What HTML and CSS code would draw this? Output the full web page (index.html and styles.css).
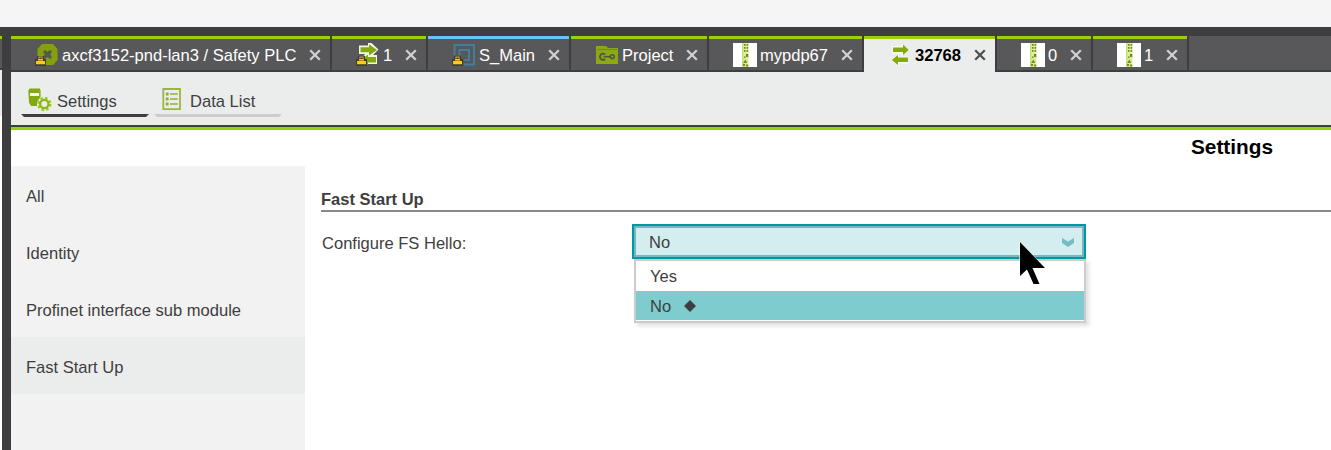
FILE: index.html
```html
<!DOCTYPE html>
<html lang="en">
<head>
<meta charset="utf-8">
<title>Settings</title>
<link rel="stylesheet" href="styles.css">
</head>
<body>
<svg width="0" height="0" class="defs">
  <defs>
    <symbol id="close" viewBox="0 0 12 12"><path d="M1.2 1.2 10.8 10.8M10.8 1.2 1.2 10.8" fill="none" stroke="currentColor" stroke-width="2.3"/></symbol>
    <symbol id="lock" viewBox="0 0 11 11"><path d="M0 4H2V1H9V4H11V11H0Z" fill="#3d3d38"/><path d="M4 3.500V2H7V3.500" fill="none" stroke="#d9b000" stroke-width="1.200"/><path d="M3 4H8V6H10V9.300H1V6H3Z" fill="#fbd000"/><path d="M3 5.500H8" stroke="#8d7a12" stroke-width=".8"/></symbol>
    <symbol id="module" viewBox="0 0 24 24"><path d="M0 0H24V24H0Z" fill="#fff"/><path d="M9 0H15.500V24H9Z" fill="#dcec9c"/><path d="M9 0H10.500V24H9Z" fill="#c9e36a"/><path d="M11 1H12.600V2.800H11ZM13.600 1H15.200V2.800H13.600ZM11 4H12.600V5.800H11ZM13.600 4H15.200V5.800H13.600ZM11 7H12.600V8.800H11ZM13.600 7H15.200V8.800H13.600ZM13 11H15.300V14H13ZM11 13.500H12.500V15H11ZM10 20 12.500 16.500 14.200 20ZM10 21H12V23H10ZM13 21.500H15.200V23.500H13Z" fill="#6f8a20"/></symbol>
  </defs>
</svg>
<div class="app">
  <div class="edge"><i class="edge-tab"></i></div>
  <div class="window">
    <nav class="tabs">
      <div class="tab t-plc">
        <svg class="icon" viewBox="0 0 24 24"><path d="M7 1H18L22.500 6V17L18 22H7L2.500 17V6Z" fill="#84a10d"/><path d="M8.500 7.500 11 7.500 12.500 9 14 7.500H16.500V10L15 11.500 16.500 13V15.500H14L12.500 14 11 15.500H8.500V13L10 11.500 8.500 10Z" fill="#55594a"/><use href="#lock" x="0" y="12" width="11" height="11"/></svg>
        <span>axcf3152-pnd-lan3 / Safety PLC</span><svg class="x"><use href="#close"/></svg>
      </div>
      <div class="tab t-one">
        <svg class="icon" viewBox="0 0 24 24"><path d="M3 2.500H12V0H15.500L22.500 6.500 17 12H21V21H5V17L9 11H3Z" fill="#f2f6e8"/><path d="M4.500 4.300H13V1.300L21 7 13 12.500V9.300H4.500ZM20 14H12V11.500L5 17 12 22V19.500H20Z" fill="#84a810"/><use href="#lock" x="0" y="12" width="11" height="11"/></svg>
        <span>1</span><svg class="x"><use href="#close"/></svg>
      </div>
      <div class="tab t-main blue">
        <svg class="icon" viewBox="0 0 24 24"><path d="M2.500 12V2H22V21.500H12M7.500 12V7H17V17H12" fill="none" stroke="#437f9c" stroke-width="2"/><use href="#lock" x="0" y="12" width="11" height="11"/></svg>
        <span>S_Main</span><svg class="x"><use href="#close"/></svg>
      </div>
      <div class="tab t-project">
        <svg class="icon" viewBox="0 0 24 24"><path d="M0 3H10L12 5H22V21H0Z" fill="#8ca812"/><path d="M1 6.500H21" stroke="#728b1c"/><path d="M9 11.500A3 3 0 1 0 9 16" fill="none" stroke="#4e5546" stroke-width="1.700"/><path d="M7.500 13.700H14.500" stroke="#4e5546" stroke-width="1.600"/><circle cx="16.300" cy="13.700" r="1.900" fill="none" stroke="#4e5546" stroke-width="1.500"/></svg>
        <span>Project</span><svg class="x"><use href="#close"/></svg>
      </div>
      <div class="tab t-mypdp">
        <svg class="icon"><use href="#module"/></svg>
        <span>mypdp67</span><svg class="x"><use href="#close"/></svg>
      </div>
      <div class="tab t-active active">
        <svg class="icon" viewBox="0 0 24 24"><path d="M1.500 3.500H11V1L18 7 11 12.500V10H1.500ZM17 14H7.500V11.500L0 17 7.500 22.500V20H17Z" fill="#f8fbee" stroke="#f8fbee"/><path d="M2 4.500H12V1.500L17.800 7 12 12V9H2ZM17 14.500H7V12L.7 17 7 22V19H17Z" fill="#84a810"/></svg>
        <span>32768</span><svg class="x"><use href="#close"/></svg>
      </div>
      <div class="tab t-num">
        <svg class="icon"><use href="#module"/></svg>
        <span>0</span><svg class="x"><use href="#close"/></svg>
      </div>
      <div class="tab t-num">
        <svg class="icon"><use href="#module"/></svg>
        <span>1</span><svg class="x"><use href="#close"/></svg>
      </div>
      <div class="tab-rest"></div>
    </nav>
    <div class="toolbar">
      <div class="tool selected">
        <svg class="tool-icon" viewBox="0 0 24 24"><path d="M1.500 .5H12L12.500 3V9L9 14V18H3L1 14.500 .3 3Z" fill="#84a810"/><path d="M2 5H11V8H2Z" fill="#f4f7ea"/><path d="M12.200 2V9" stroke="#a9c94b"/><circle cx="16.300" cy="16" r="6" fill="none" stroke="#9cce18" stroke-width="2.400" stroke-dasharray="2.600 2.110"/><circle cx="16.300" cy="16" r="4.200" fill="#ebedec" stroke="#8eb512" stroke-width="2.300"/></svg>
        <span>Settings</span>
      </div>
      <div class="tool">
        <svg class="tool-icon" viewBox="-1 0 24 24"><path d="M1.300 1H18V21.200H1.300Z" fill="none" stroke="#99b83a" stroke-width="1.800"/><path d="M8 6H15.800M8 11H15.800M8 16H15.800" stroke="#93af32" stroke-width="1.400"/><path d="M3.800 4.600H6.600V7.400H3.800ZM3.800 9.600H6.600V12.400H3.800ZM3.800 14.600H6.600V17.400H3.800Z" fill="#93af32"/></svg>
        <span>Data List</span>
      </div>
    </div>
    <div class="page">
      <h1 class="title">Settings</h1>
      <div class="columns">
        <aside class="sidebar">
          <div class="item">All</div>
          <div class="item">Identity</div>
          <div class="item">Profinet interface sub module</div>
          <div class="item current">Fast Start Up</div>
        </aside>
        <main class="content">
          <h2 class="section">Fast Start Up</h2>
          <div class="row">
            <label class="label">Configure FS Hello:</label>
            <div class="combo">
              <div class="field"><span>No</span><svg class="chevron" viewBox="0 0 12 9"><path d="M0 0 6 3.500 12 0V5L6 9 0 5Z" fill="#76bcc2"/></svg></div>
              <div class="menu">
                <div class="option">Yes</div>
                <div class="option picked">No<svg class="diamond" viewBox="0 0 12 12"><path d="M6 0 12 6 6 12 0 6Z" fill="#3e3e40"/></svg></div>
              </div>
              <svg class="cursor" viewBox="0 0 28 46"><path d="M1 0V34L8 27.500 14.500 42H20.500L13.500 26H26Z" fill="#000" stroke="#fff" stroke-width="1" paint-order="stroke"/></svg>
            </div>
          </div>
        </main>
      </div>
    </div>
  </div>
</div>
</body>
</html>
```
FILE: styles.css
```css
* { box-sizing: border-box; }
body { margin: 0; background: #f5f5f5; color: #3e3e40; font: 16.55px/20px "Liberation Sans", Arial, sans-serif; }
svg { display: block; flex: none; }
.defs { position: absolute; }
span { white-space: nowrap; }
.app { display: flex; width: 1331px; height: 450px; padding-top: 27px; overflow: hidden; }
.edge { width: 2px; padding-top: 9px; background: linear-gradient(#3e3e40 43px, #ebedec 43px, #ebedec 89px, #fff 89px); }
.edge-tab { display: block; height: 32px; border-top: 3px solid #97d00c; background: #58585a; }
.window { width: 1329px; border-left: 9px solid #3e3e40; }
.tabs { display: flex; gap: 2px; height: 45px; padding-top: 9px; background: #3e3e40; }
.tab { display: flex; flex: none; height: 34px; padding: 4px 9px 0 0; border-top: 3px solid #97d00c; background: #58585a; color: #fff; }
.blue { border-color: #66c4fb; }
.tab-rest { flex: 1; height: 34px; background: #58585a; }
.tab span { line-height: 25px; }
.icon { width: 24px; height: 24px; overflow: visible; }
.x { width: 12px; height: 12px; margin: 6px 0 0 auto; color: #d0d0d0; }
.t-plc { width: 319px; padding-left: 24px; }
.t-plc span { margin-left: 3px; }
.t-one { width: 94px; padding-left: 24px; }
.t-one span { margin-left: 3px; }
.t-main { width: 141px; padding-left: 24px; }
.t-main span { margin-left: 3px; }
.t-project { width: 136px; padding-left: 25px; }
.t-project span { margin-left: 2px; }
.t-mypdp { width: 153px; padding-left: 24px; }
.t-mypdp span { margin-left: 3px; }
.t-active { width: 131px; padding-left: 27px; }
.t-num { width: 94px; padding-left: 24px; }
.t-num span { margin-left: 3px; }
.active { height: 36px; background: #ebedec; color: #000; font-weight: bold; }
.active .x { color: #505050; }
.toolbar { display: flex; gap: 5px; height: 58px; padding: 14px 10px 0; background: #ebedec; border-bottom: 3px solid #97d00c; box-shadow: inset 0 -2px #3e3e40; }
.tool { display: flex; width: 128px; height: 31px; padding: 2px 0 0 7px; background: linear-gradient(#cbccd0, #cbccd0) 0 100% / 100% 3px no-repeat; clip-path: polygon(0 0, 100% 0, 100% 28px, calc(100% - 3px) 100%, 3px 100%, 0 28px); }
.selected { background-image: linear-gradient(#3e3e40, #3e3e40); }
.tool-icon { width: 24px; height: 24px; }
.tool span { margin: 4px 0 0 5px; }
.page { height: 320px; background: #fff; }
.title { height: 36px; margin: 0; padding: 5px 0 0 1180px; color: #000; font-size: 20.8px; line-height: 24px; white-space: nowrap; }
.columns { display: flex; height: 284px; }
.sidebar { width: 294px; background: #f2f2f2; }
.item { height: 57px; padding: 21px 15px 0; }
.current { background: #ebedec; }
.content { flex: 1; padding: 23px 0 0 16px; }
.section { height: 23px; margin: 0; border-bottom: 2px solid #888; font-size: 16.5px; line-height: 20px; }
.row { display: flex; padding-top: 12px; }
.label { width: 311px; padding: 10px 0 0 1px; }
.combo { position: relative; width: 454px; }
.field { display: flex; justify-content: space-between; height: 35px; padding: 7px 10px 0 15px; border: 2px solid #00989f; box-shadow: inset 0 0 0 2px #76b8bf; background: #d4edee; }
.chevron { width: 12px; height: 9px; margin-top: 5px; }
.menu { position: absolute; left: 2px; top: 35px; width: 452px; height: 64px; border: 2px solid #cbccd0; background: #fff; box-shadow: 3px 3px 4px rgba(0,0,0,.12); }
.option { display: flex; height: 30px; padding: 6px 14px 0; }
.picked { height: 29px; background: #7fcccf; }
.diamond { width: 12px; height: 12px; margin: 3px 0 0 13px; }
.cursor { position: absolute; left: 387px; top: 18px; width: 28px; height: 46px; overflow: visible; }
```
